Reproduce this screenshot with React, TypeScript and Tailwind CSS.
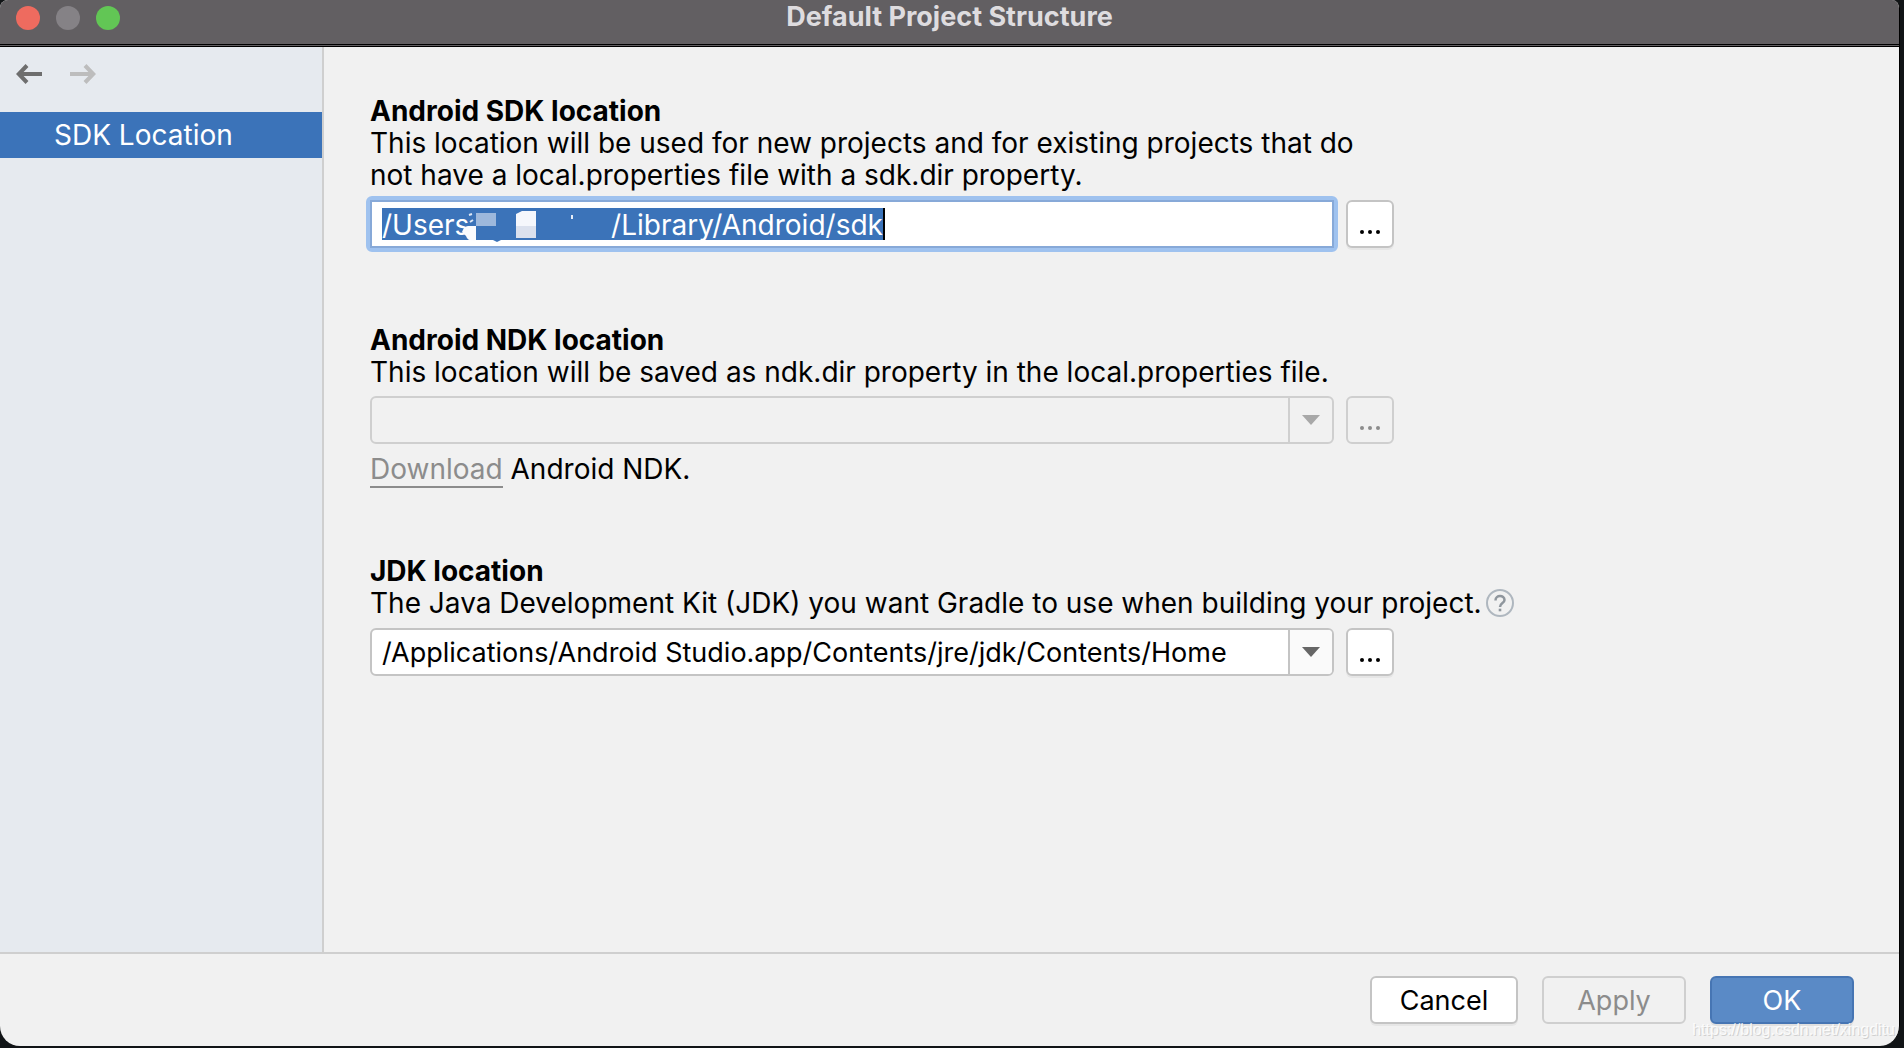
import type { ReactNode } from 'react'
import { useState } from 'react'

function Arrow({ back }: { back?: boolean }) {
  return (
    <svg viewBox="0 0 26 20" className="h-5 w-[26px]" fill="none" stroke="currentColor" strokeWidth="4">
      {back ? <path d="M11 1.5 L2.8 10 L11 18.5 M2.8 10 H26" /> : <path d="M15 1.5 L23.2 10 L15 18.5 M23.2 10 H0" />}
    </svg>
  )
}

function BrowseButton({ label, disabled }: { label: string; disabled?: boolean }) {
  return (
    <button
      type="button"
      aria-label={label}
      disabled={disabled}
      className="flex size-12 shrink-0 items-end justify-center gap-1 rounded-md border-2 border-[#c4c4c4] bg-white pb-3 text-black shadow-[0_2px_0_#e6e6e6] disabled:border-[#cfcfcf] disabled:bg-transparent disabled:text-[#8c8c8c] disabled:shadow-none"
    >
      <span className="size-1 rounded-full bg-current" />
      <span className="size-1 rounded-full bg-current" />
      <span className="size-1 rounded-full bg-current" />
    </button>
  )
}

function Combo({ id, value, disabled }: { id: string; value: string; disabled?: boolean }) {
  return (
    <div
      className={
        disabled
          ? 'relative flex h-12 flex-1 overflow-hidden rounded-md border-2 border-[#cfcfcf] text-[#a8a8a8]'
          : 'relative flex h-12 flex-1 overflow-hidden rounded-md border-2 border-[#c4c4c4] bg-white text-[#666666]'
      }
    >
      <select id={id} disabled={disabled} className="min-w-0 flex-1 appearance-none bg-transparent pt-[2px] pr-12 pl-[10px] text-[27px] text-black opacity-100 outline-none">
        <option>{value}</option>
      </select>
      <span
        className={
          disabled
            ? 'pointer-events-none absolute inset-y-0 right-0 flex w-11 items-center justify-center border-l-2 border-[#cfcfcf]'
            : 'pointer-events-none absolute inset-y-0 right-0 flex w-11 items-center justify-center border-l-2 border-[#c4c4c4] bg-[#fafafa]'
        }
      >
        <svg viewBox="0 0 18 10" className="h-[10px] w-[18px]" fill="currentColor">
          <path d="M0 0H18L9 10Z" />
        </svg>
      </span>
    </div>
  )
}

function Section({ id, title, children }: { id: string; title: string; children: ReactNode }) {
  return (
    <section>
      <h2 className="font-bold">
        <label htmlFor={id}>{title}</label>
      </h2>
      {children}
    </section>
  )
}

function SelectedPath() {
  const [path, setPath] = useState('/Users' + '\u00a0'.repeat(18) + '/Library/Android/sdk')
  return (
    <div className="-m-1 flex flex-1 rounded-md border-4 border-[#9fc2ef]">
      <div className="flex h-12 flex-1 items-center border-2 border-[#87a9d8] bg-white pl-[10px]">
        <div className="relative flex">
          <input
            id="sdk"
            value={path}
            onChange={(e) => setPath(e.target.value)}
            className="field-sizing-content h-8 border-r-2 border-black bg-[#3b73b9] pt-[2px] text-white outline-none"
          />
          <svg viewBox="0 0 150 34" className="pointer-events-none absolute top-0 left-[78px] h-[34px] w-[150px]">
            <path d="M2 24 Q4 18 8 18 H16 V32 Q8 34 6 28Z" fill="#fafbfe" />
            <path d="M16 5H36V18H16Z" fill="#9db8dc" />
            <path d="M9 7L12 6M10 14L13 12" stroke="#dfe8f5" strokeWidth="2" />
            <path d="M56 6L62 3H76V18H56Z" fill="#f5f7fc" />
            <path d="M56 18H76V30H56Z" fill="#dbe1ee" />
            <path d="M112 7V11" stroke="#e6edf8" strokeWidth="2" />
            <path d="M33 32H41L37 34Z" fill="#3b73b9" />
          </svg>
        </div>
      </div>
    </div>
  )
}

export default function App() {
  return (
    <div className="h-screen overflow-hidden bg-[#111416] pr-1 pb-[2px] font-['Inter','Liberation_Sans',sans-serif] text-[28px] leading-8 text-black">
      <div className="relative flex h-full flex-col overflow-hidden rounded-[20px] rounded-tl-lg rounded-tr-lg border-r border-black bg-[#f1f1f1]">
        <header className="relative flex h-[47px] shrink-0 items-center border-b-[3px] border-double border-black bg-[#625f62] px-4 pb-2">
          <div className="flex gap-4">
            <button type="button" aria-label="Close" className="size-6 rounded-full bg-[#ee6b5f]" />
            <button type="button" aria-label="Minimize" className="size-6 rounded-full bg-[#858286]" />
            <button type="button" aria-label="Zoom" className="size-6 rounded-full bg-[#62c655]" />
          </div>
          <h1 className="pointer-events-none absolute inset-x-0 top-0 text-center text-[27px] leading-[34px] font-bold text-[#dedcdf]">Default Project Structure</h1>
        </header>

        <div className="flex min-h-0 flex-1">
          <aside className="w-[324px] shrink-0 border-r-2 border-[#cfcfcf] bg-[#e6eaef]">
            <div className="flex h-[65px] items-start gap-7 px-4 pt-[17px]">
              <button type="button" aria-label="Back" className="text-[#6e6e6e]">
                <Arrow back />
              </button>
              <button type="button" aria-label="Forward" disabled className="text-[#bdbdbd]">
                <Arrow />
              </button>
            </div>
            <nav>
              <a href="#sdk" className="flex h-[46px] items-center bg-[#3b73b9] pl-[54px] text-white">
                SDK Location
              </a>
            </nav>
          </aside>

          <main className="flex min-w-0 flex-1 flex-col pt-12 pl-[46px]">
            <Section id="sdk" title="Android SDK location">
              <p>
                This location will be used for new projects and for existing projects that do
                <br />
                not have a local.properties file with a sdk.dir property.
              </p>
              <div className="mt-[9px] mb-[76px] flex max-w-[1024px] gap-3">
                <SelectedPath />
                <BrowseButton label="Browse for Android SDK" />
              </div>
            </Section>

            <Section id="ndk" title="Android NDK location">
              <p>This location will be saved as ndk.dir property in the local.properties file.</p>
              <div className="mt-2 flex max-w-[1024px] gap-3">
                <Combo id="ndk" value="" disabled />
                <BrowseButton label="Browse for Android NDK" disabled />
              </div>
              <p className="mt-[9px] mb-[70px]">
                <a href="#download" className="border-b-2 border-[#8c8c8c] leading-7 text-[#8c8c8c]">
                  Download
                </a>{' '}
                Android NDK.
              </p>
            </Section>

            <Section id="jdk" title="JDK location">
              <div className="flex h-8 items-center gap-1">
                <p>The Java Development Kit (JDK) you want Gradle to use when building your project.</p>
                <button type="button" aria-label="Help">
                  <svg viewBox="0 0 28 28" className="size-7" fill="none">
                    <circle cx="14" cy="14" r="13" stroke="#afb7bf" strokeWidth="2" />
                    <path d="M9.5 11.5C9.5 5.5 18.5 5.8 18.5 11C18.5 14.2 14 14 14 18" stroke="#8f969d" strokeWidth="2.5" />
                    <path d="M12.7 19.7H15.3V22.3H12.7Z" fill="#8f969d" />
                  </svg>
                </button>
              </div>
              <div className="mt-[9px] flex max-w-[1024px] gap-3">
                <Combo id="jdk" value="/Applications/Android Studio.app/Contents/jre/jdk/Contents/Home" />
                <BrowseButton label="Browse for JDK" />
              </div>
            </Section>
          </main>
        </div>

        <footer className="flex h-[94px] shrink-0 items-start justify-end gap-6 border-t-2 border-[#cfcfcf] pt-[22px] pr-[45px] text-[27px]">
          <button type="button" className="h-12 w-[148px] rounded-md border-2 border-[#c4c4c4] bg-white pt-[2px] shadow-[0_2px_0_#e6e6e6]">
            Cancel
          </button>
          <button type="button" disabled className="h-12 w-36 rounded-md border-2 border-[#cfcfcf] pt-[2px] text-[#8c8c8c]">
            Apply
          </button>
          <button type="button" className="h-12 w-36 rounded-md border-2 border-[#4675b3] bg-[#5a8ac6] pt-[2px] text-white shadow-[0_2px_0_#e0e0e0]">
            OK
          </button>
        </footer>
        <span className="pointer-events-none absolute right-1 bottom-1 font-['Liberation_Sans',sans-serif] text-base text-white/80 [text-shadow:1px_1px_0_#d0d0d0]">
          https://blog.csdn.net/xingditu
        </span>
      </div>
    </div>
  )
}
